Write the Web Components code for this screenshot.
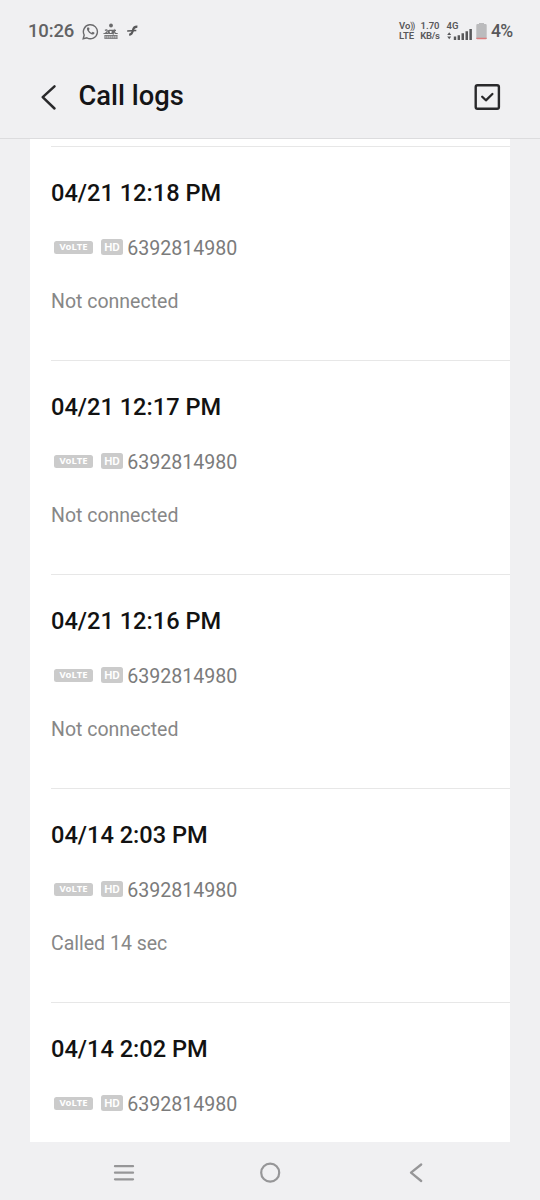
<!DOCTYPE html>
<html lang="en">
<head>
<meta charset="utf-8">
<title>Call logs</title>
<style>
html,body{margin:0;height:100%;background:#f0f0f2}
body{font-family:Roboto,"Liberation Sans",sans-serif;overflow:hidden}
</style>
</head>
<body>
<call-app></call-app>
<script>
function define(name, html, init) {
  const t = document.createElement('template');
  t.innerHTML = html;
  customElements.define(name, class extends HTMLElement {
    constructor() {
      super();
      this.attachShadow({mode: 'open'}).append(t.content.cloneNode(true));
    }
    connectedCallback() { if (init) init(this); }
  });
}

define('status-bar', `<style>
:host{display:flex;box-sizing:border-box;height:62px;padding:0 28px 0 28px;align-items:center;color:#58585a}
svg{display:block;flex:none}
.time{font-size:18.5px;line-height:20px;letter-spacing:-.15px;font-weight:500;width:53px;white-space:nowrap;color:#626264}
.gap{flex:1}
.stack{display:flex;flex-direction:column;font-size:9.5px;line-height:10px;font-weight:600;white-space:nowrap;align-items:center}
.stack i{font-style:normal;font-weight:500;font-size:8.500px;letter-spacing:-1.100px}
.signal{display:flex;flex-direction:column;width:26px}
.signal span{font-size:9.5px;line-height:9px;font-weight:600}
.signal svg{margin-top:-1px}
.pct{font-size:17.5px;line-height:20px;font-weight:500;width:21px;margin-left:4px;white-space:nowrap;letter-spacing:-.8px}
</style>
<span class="time">10:26</span>
<svg style="margin-left:.5px" width="17" height="17" viewBox="0 0 17 17" fill="none" stroke="#6a6a6c"><path d="M1.200 15.800l1-3.800a7 7 0 1 1 2.700 2.800z" stroke-width="1.400"/><path d="M5.400 4.600c-2 2 3 8 6.200 6.700 1.200-.6 1-1.300.6-1.700l-1.500-.8-1 1c-1-.2-2.500-1.800-2.800-2.900l.7-.8-.6-1.600z" fill="#6a6a6c" stroke="none"/></svg>
<svg style="margin-left:4px" width="16" height="18" viewBox="0 0 16 18" fill="none" stroke="#6a6a6c"><circle cx="8" cy="3.500" r="1.900" fill="#6a6a6c" stroke="none"/><path d="M2 8.500c1-1 2.300-.8 2.300.6S2.500 11 1.700 11.500h3.500L5.800 8l.7 3.500H9L9.400 8.200l.8 3.300 1-3 1 3h2.500M6 8.300h7" stroke-width="1.200"/><path d="M1.500 13.600h13M1.500 16.300h13" stroke-width=".9"/><path d="M2 13.500v3m1.900-3v3m2-3v3m2-3v3m2-3v3m2-3v3m2-3v3" stroke-width="1"/></svg>
<svg style="margin-left:7px" width="13" height="12" viewBox="0 0 13 12" fill="none" stroke="#58585a"><path d="M11.400 1.600C8.400 1.500 7.400 2.500 7 5S5.600 9.400 3.200 9.900" stroke-width="2.100"/><path d="M1.200 5.900l9.100-.3" stroke-width="1.500"/></svg>
<div class="gap"></div>
<div class="stack" style="width:16px;margin-right:-.5px"><span>Vo<i>))</i></span><span>LTE</span></div>
<div class="stack" style="width:20px;margin:0 6.500px 0 6px"><span>1.70</span><span style="letter-spacing:-.3px">KB/s</span></div>
<div class="signal"><span>4G</span><svg width="26" height="12" viewBox="0 0 26 12" fill="#58585a"><path d="M.2 6L2.200 3.300 4.200 6zM.2 7.500l2 2.700 2-2.700zM6.800 7.500h2.400V11H6.800zM10.600 6.300H13V11h-2.400zM14.500 4.300h2.500V11h-2.500zM18.500 2.200h2.500V11h-2.500zM22.400 0h2.500v11h-2.500z"/></svg></div>
<svg style="margin-left:3.500px" width="11" height="18" viewBox="0 0 11 18"><path d="M3 1h5v1h1.500q1.200 0 1.200 1.200V17H.3V3.200Q.3 2 1.500 2H3z" fill="#bbbbbd"/><path d="M.3 15.800h10.400v.5q0 1-1 1H1.300q-1 0-1-1z" fill="#dc7d7d"/></svg>
<span class="pct">4%</span>`);

define('app-header', `<style>
:host{display:flex;box-sizing:border-box;height:77px;padding:0 39px 0 40px;align-items:flex-start;border-bottom:1px solid #dcdcde}
.back{margin-top:22px}
h1{margin:18px 0 0 20.500px;flex:1;font-size:27.300px;line-height:32px;font-weight:500;color:#151517;white-space:nowrap}
.check{margin-top:21px}
svg{display:block;flex:none}
</style>
<svg class="back" width="18" height="28" viewBox="0 0 18 28" fill="none" stroke="#29292b" stroke-width="2.500" stroke-linecap="round" stroke-linejoin="round"><path d="M14.500 2.300L2.700 13.200l11.800 11.300"/></svg>
<h1><slot></slot></h1>
<svg class="check" width="27" height="28" viewBox="0 0 27 28" fill="none" stroke="#29292b" stroke-width="2.400" stroke-linecap="round" stroke-linejoin="round"><rect x="1.700" y="2.200" width="23.200" height="23.600" rx="1.800"/><path d="M8.200 13.700l3.700 3.600 6.500-6.300" stroke-width="2.300"/></svg>`);

define('tech-badge', `<style>
:host{display:flex;box-sizing:border-box;align-items:center;justify-content:center;background:#cbcbcb;color:#fff;border-radius:2.500px;white-space:nowrap}
:host([kind=volte]){width:39px;height:13px;font:700 9.500px/12px "Open Sans",sans-serif;letter-spacing:0;padding-bottom:1px}
:host([kind=hd]){width:22px;height:16px;font:600 11.500px/16px Roboto,sans-serif}
</style><slot></slot>`);

define('call-entry', `<style>
:host{display:block;box-sizing:border-box;height:214px;border-top:1px solid #e7e7e7;padding-top:31px}
.when{font-size:23.600px;line-height:30px;font-weight:500;color:#121212;white-space:nowrap}
.line{display:flex;align-items:center;height:24px;margin-top:28px;padding-left:3px}
.num{font-size:19.600px;line-height:24px;color:#7b7b7b;margin:2px 0 0 4.200px}
.status{margin-top:30px;font-size:19.500px;line-height:24px;color:#878787;white-space:nowrap}
tech-badge{margin-bottom:2px}
tech-badge[kind=hd]{margin-left:8px}
</style>
<div class="when"></div>
<div class="line"><tech-badge kind="volte">VoLTE</tech-badge><tech-badge kind="hd">HD</tech-badge><span class="num"></span></div>
<div class="status"><slot></slot></div>`, el => {
  el.shadowRoot.querySelector('.when').textContent = el.getAttribute('when');
  el.shadowRoot.querySelector('.num').textContent = el.getAttribute('number');
});

define('call-list', `<style>
:host{display:block;box-sizing:border-box;margin:0 30px;padding:7px 0 0 21px;background:#fff;overflow:hidden;flex:1;min-height:0}
</style><slot></slot>`);

define('nav-bar', `<style>
:host{display:flex;height:58px;align-items:center;justify-content:center}
svg{display:block;flex:none;width:22px;height:22px;margin:3px 62px 0}
</style>
<svg viewBox="0 0 22 22" stroke="#969698" stroke-width="2.300" stroke-linecap="round"><path d="M2 4.200h18M2 10.700h18M2 17.300h18"/></svg>
<svg viewBox="0 0 22 22" fill="none" stroke="#969698" stroke-width="2.200"><circle cx="11.200" cy="10.700" r="9"/></svg>
<svg viewBox="0 0 22 22" fill="none" stroke="#969698" stroke-width="2.300" stroke-linecap="round" stroke-linejoin="round"><path d="M16.200 2.500L6 10.700 16.200 19"/></svg>`);

define('call-app', `<style>
:host{display:flex;flex-direction:column;width:540px;height:1200px;background:#f0f0f2}
status-bar,app-header,nav-bar{flex:none}
</style>
<status-bar></status-bar>
<app-header>Call logs</app-header>
<call-list>
<call-entry when="04/21 12:18 PM" number="6392814980">Not connected</call-entry>
<call-entry when="04/21 12:17 PM" number="6392814980">Not connected</call-entry>
<call-entry when="04/21 12:16 PM" number="6392814980">Not connected</call-entry>
<call-entry when="04/14 2:03 PM" number="6392814980">Called 14 sec</call-entry>
<call-entry when="04/14 2:02 PM" number="6392814980"></call-entry>
</call-list>
<nav-bar></nav-bar>`);
</script>
</body>
</html>
